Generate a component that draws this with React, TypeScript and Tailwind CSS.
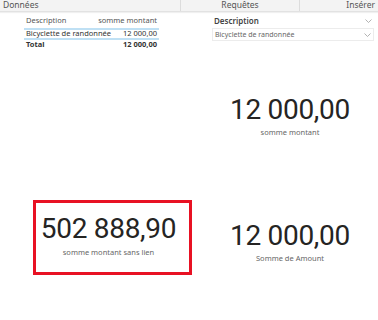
import React from "react";

const ui = { fontFamily: '"Noto Sans", "Open Sans", sans-serif' };
const num = { fontFamily: 'Roboto, "DejaVu Sans", sans-serif' };

function Chevron() {
  return (
    <svg width="7" height="4" viewBox="0 0 7 4" className="shrink-0">
      <path d="M0.5 0.5 L3.5 3.5 L6.5 0.5" fill="none" stroke="#a0a0a0" strokeWidth="0.8" />
    </svg>
  );
}

export default function App() {
  return (
    <div className="w-[378px] h-[320px] bg-white overflow-hidden" style={ui}>
      <div className="h-[12px] flex items-center bg-[#f3f3f3] border-b border-[#e2e2e2] text-[8.5px] leading-none text-[#555] shadow-[0_1px_1px_rgba(0,0,0,0.06)]">
        <div className="w-[181px] h-full flex items-center pl-[3px] border-r border-[#dcdcdc]">Données</div>
        <div className="w-[119px] h-full flex items-center justify-center border-r border-[#dcdcdc]">Requêtes</div>
        <div className="flex-1 h-full flex items-center justify-end pr-[3px]">Insérer</div>
      </div>

      <div className="grid grid-cols-[190px_188px]">
        <div className="pl-[24px] pr-[31px] pt-[3px] text-[7.5px] leading-none text-[#333]">
          <div className="flex justify-between h-[15px] items-center pb-[1px] px-[2px] text-[#555] border-b-2 border-[#bfe0f4]">
            <span>Description</span>
            <span>somme montant</span>
          </div>
          <div className="flex justify-between h-[10px] items-center px-[2px] border-b-2 border-[#bfe0f4]">
            <span>Bicyclette de randonnée</span>
            <span>12 000,00</span>
          </div>
          <div className="flex justify-between h-[10px] items-center px-[2px] font-bold">
            <span>Total</span>
            <span>12 000,00</span>
          </div>
        </div>

        <div className="pl-[22px] pr-[4px] pt-[3px]">
          <div className="flex justify-between items-center h-[12px] pl-[2px] pr-[2px] text-[8px] leading-none font-semibold text-[#444]">
            <span>Description</span>
            <Chevron />
          </div>
          <div className="mt-[1px] h-[13px] flex justify-between items-center pl-[2px] pr-[2px] border border-[#ececec] text-[7px] leading-none text-[#666]">
            <span>Bicyclette de randonnée</span>
            <Chevron />
          </div>
        </div>

        <div />
        <div className="pt-[46px] pl-[12px] flex flex-col items-center">
          <div className="text-[28px] leading-none tracking-[-0.3px] text-[#252423]" style={num}>12 000,00</div>
          <div className="mt-[3px] text-[7.5px] leading-[10px] text-[#666]">somme montant</div>
        </div>

        <div className="pl-[33px] pt-[63px]">
          <div className="w-[159px] h-[75px] border-[3px] border-[#e81123] flex flex-col items-center pt-[12px] pr-[8px]">
            <div className="text-[28px] leading-none tracking-[-0.3px] text-[#252423]" style={num}>502 888,90</div>
            <div className="mt-[4px] text-[7.5px] leading-[10px] text-[#666]">somme montant sans lien</div>
          </div>
        </div>
        <div className="pt-[85px] pl-[12px] flex flex-col items-center">
          <div className="text-[28px] leading-none tracking-[-0.3px] text-[#252423]" style={num}>12 000,00</div>
          <div className="mt-[3px] text-[7.5px] leading-[10px] text-[#666]">Somme de Amount</div>
        </div>
      </div>
    </div>
  );
}
